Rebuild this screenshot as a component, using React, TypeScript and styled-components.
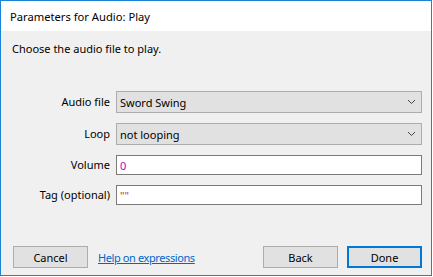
import * as React from 'react';
import styled, { createGlobalStyle } from 'styled-components';

const GlobalStyle = createGlobalStyle`
  html, body {
    margin: 0;
    padding: 0;
    background: #ffffff;
  }
  body {
    font-family: "Noto Sans", "Open Sans", Arial, sans-serif;
    font-size: 11px;
    color: #000000;
  }
`;

const Chevron: React.FC = () => (
  <svg width="9" height="6" viewBox="0 0 9 6">
    <path d="M1 1 L4.5 4.5 L8 1" fill="none" stroke="#444" strokeWidth="1" />
  </svg>
);

const App: React.FC = () => {
  return (
    <>
      <GlobalStyle />
      <Window>
        <TitleBar>Parameters for Audio: Play</TitleBar>
        <Body>
          <Description>Choose the audio file to play.</Description>
          <Form>
            <Label>Audio file</Label>
            <Combo>
              <span>Sword Swing</span>
              <Chevron />
            </Combo>
            <Label>Loop</Label>
            <Combo>
              <span>not looping</span>
              <Chevron />
            </Combo>
            <Label>Volume</Label>
            <TextField>
              <Token color="#c000c0">0</Token>
            </TextField>
            <Label>Tag (optional)</Label>
            <TextField>
              <Token color="#c8334f">""</Token>
            </TextField>
          </Form>
          <Footer>
            <Button>Cancel</Button>
            <HelpLink href="#">Help on expressions</HelpLink>
            <Spacer />
            <Button>Back</Button>
            <Button primary>Done</Button>
          </Footer>
        </Body>
      </Window>
    </>
  );
};

export default App;

const Window = styled.div`
  width: 432px;
  height: 276px;
  box-sizing: border-box;
  border: 1px solid #1883d7;
  display: flex;
  flex-direction: column;
  background: #f0f0f0;
`;

const TitleBar = styled.div`
  height: 30px;
  flex: none;
  background: #ffffff;
  display: flex;
  align-items: center;
  padding-left: 9px;
  font-size: 11.2px;
`;

const Body = styled.div`
  flex: 1;
  display: flex;
  flex-direction: column;
  padding: 10px 9px 7px 11px;
`;

const Description = styled.div`
  line-height: 16px;
`;

const Form = styled.div`
  margin-top: 34px;
  display: grid;
  grid-template-columns: 98px 1fr;
  column-gap: 6px;
  row-gap: 10px;
  align-items: center;
`;

const Label = styled.div`
  text-align: right;
  line-height: 16px;
  white-space: nowrap;
`;

const Combo = styled.div`
  height: 22px;
  box-sizing: border-box;
  border: 1px solid #adadad;
  background: #e1e1e1;
  display: flex;
  align-items: center;
  justify-content: space-between;
  padding: 0 5px 0 3px;
`;

const TextField = styled.div`
  height: 20px;
  box-sizing: border-box;
  border: 1px solid #7a7a7a;
  background: #ffffff;
  display: flex;
  align-items: center;
  padding: 0 3px;
`;

const Token = styled.span<{ color: string }>`
  color: ${(p) => p.color};
`;

const Footer = styled.div`
  margin-top: auto;
  display: flex;
  align-items: center;
`;

const Spacer = styled.div`
  flex: 1;
`;

const Button = styled.button<{ primary?: boolean }>`
  width: 75px;
  height: 22px;
  box-sizing: border-box;
  margin: 0 0 0 9px;
  padding: 0;
  font: inherit;
  color: #000;
  background: #e1e1e1;
  border: ${(p) => (p.primary ? '2px solid #0078d7' : '1px solid #adadad')};
  &:first-child {
    margin-left: 1px;
  }
`;

const HelpLink = styled.a`
  margin-left: 10px;
  color: #0066cc;
  text-decoration: underline;
  letter-spacing: -0.4px;
`;
